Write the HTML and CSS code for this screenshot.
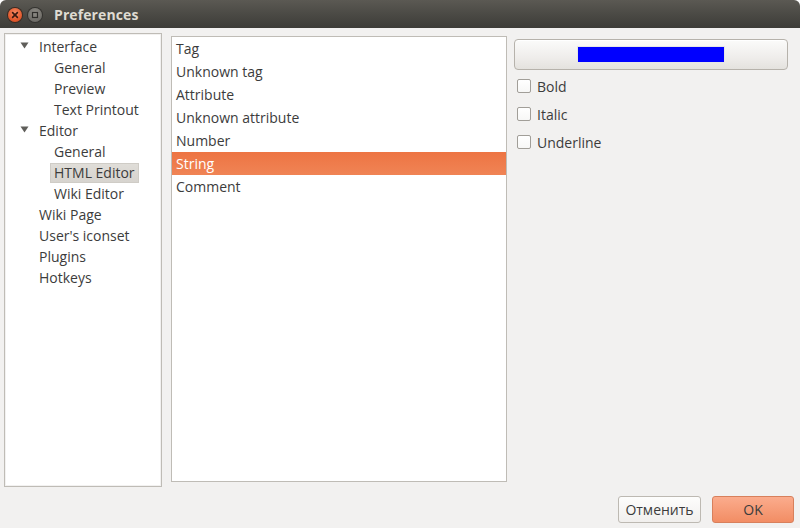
FILE: index.html
```html
<!DOCTYPE html>
<html>
<head>
<meta charset="utf-8">
<link rel="stylesheet" href="styles.css">
</head>
<body>
<div class="window">
  <div class="titlebar">
    <span class="wbtn close"><svg width="14" height="14" viewBox="0 0 14 14"><path d="M4.6 4.6 L9.4 9.4 M9.4 4.6 L4.6 9.4" stroke="#3a1a10" stroke-width="1.6" stroke-linecap="round"/></svg></span>
    <span class="wbtn maxi"><svg width="14" height="14" viewBox="0 0 14 14"><rect x="4.5" y="4.5" width="5" height="5" fill="none" stroke="#2e2d2a" stroke-width="1.2"/></svg></span>
    <span class="title">Preferences</span>
  </div>
  <div class="content">
    <div class="main">
      <div class="tree">
        <div class="node top"><span class="arrow"><svg width="9" height="7" viewBox="0 0 9 7"><polygon points="0.5,0.5 8.5,0.5 4.5,6.5" fill="#5f5e5a"/></svg></span>Interface</div>
        <div class="node child"><span class="lbl">General</span></div>
        <div class="node child"><span class="lbl">Preview</span></div>
        <div class="node child"><span class="lbl">Text Printout</span></div>
        <div class="node top"><span class="arrow"><svg width="9" height="7" viewBox="0 0 9 7"><polygon points="0.5,0.5 8.5,0.5 4.5,6.5" fill="#5f5e5a"/></svg></span>Editor</div>
        <div class="node child"><span class="lbl">General</span></div>
        <div class="node child"><span class="lbl sel">HTML Editor</span></div>
        <div class="node child"><span class="lbl">Wiki Editor</span></div>
        <div class="node top leaf">Wiki Page</div>
        <div class="node top leaf">User's iconset</div>
        <div class="node top leaf">Plugins</div>
        <div class="node top leaf">Hotkeys</div>
      </div>
      <div class="list">
        <div class="item">Tag</div>
        <div class="item">Unknown tag</div>
        <div class="item">Attribute</div>
        <div class="item">Unknown attribute</div>
        <div class="item">Number</div>
        <div class="item selected">String</div>
        <div class="item">Comment</div>
      </div>
      <div class="props">
        <button class="colorbtn"><span class="swatch"></span></button>
        <label class="check"><span class="box"></span>Bold</label>
        <label class="check"><span class="box"></span>Italic</label>
        <label class="check"><span class="box"></span>Underline</label>
      </div>
    </div>
    <div class="footer">
      <button class="btn">Отменить</button>
      <button class="btn ok">OK</button>
    </div>
  </div>
</div>
</body>
</html>
```
FILE: styles.css
```css
* { box-sizing: border-box; }
html, body { margin: 0; padding: 0; }
body {
  width: 800px;
  height: 528px;
  background: #ffffff;
  font-family: "Open Sans", "Noto Sans", "DejaVu Sans", sans-serif;
  font-size: 14px;
  color: #3c3c3c;
  overflow: hidden;
}
.window {
  width: 800px;
  height: 528px;
  display: flex;
  flex-direction: column;
  background: #f2f1f0;
  border-radius: 6px 6px 0 0;
  overflow: hidden;
}
.titlebar {
  height: 28px;
  flex: none;
  display: flex;
  align-items: center;
  padding: 1px 0 0 8px;
  background: linear-gradient(#5b5953, #4b4a45 50%, #3d3c38);
}
.wbtn {
  width: 14px;
  height: 14px;
  border-radius: 50%;
  display: flex;
}
.close {
  background: radial-gradient(circle at 50% 35%, #f58a64, #e55b2e 60%, #c9431c);
  box-shadow: 0 0 0 1px #3a2a22;
}
.maxi {
  margin-left: 6px;
  background: radial-gradient(circle at 50% 35%, #8e8c86, #6f6d68 70%, #5d5b56);
  box-shadow: 0 0 0 1px #33322f;
}
.title {
  margin-left: 12px;
  font-weight: bold;
  color: #dfdbd2;
  font-size: 14px;
  letter-spacing: 0.1px;
}
.content {
  flex: 1;
  display: flex;
  flex-direction: column;
  padding: 5px 6px 5px 4px;
}
.main {
  display: flex;
  align-items: flex-start;
  height: 454px;
}
.tree {
  width: 158px;
  height: 454px;
  background: #ffffff;
  border: 1px solid #bfbcb6;
  box-shadow: inset 0 0 0 1px #f2f1f0;
  padding-top: 2px;
}
.node {
  height: 21px;
  line-height: 21px;
  display: flex;
  align-items: center;
  white-space: nowrap;
}
.node.top { padding-left: 14px; }
.node.leaf { padding-left: 34px; }
.arrow {
  width: 20px;
  display: flex;
  align-items: center;
  padding-left: 1px;
  margin-top: -2px;
}
.node.child { padding-left: 45px; }
.lbl {
  padding: 0 4px;
  height: 20px;
  line-height: 20px;
}
.lbl.sel {
  background: linear-gradient(#e0ded9, #d6d3ce);
  box-shadow: inset 0 0 0 1px #cfccc6;
}
.list {
  margin-left: 9px;
  margin-top: 3px;
  width: 336px;
  height: 446px;
  background: #ffffff;
  border: 1px solid #bfbcb6;
}
.item {
  height: 23px;
  line-height: 23px;
  padding-left: 4px;
}
.item.selected {
  background: linear-gradient(#ed7443, #f08455);
  color: #ffffff;
}
.props {
  margin-left: 7px;
  margin-top: 6px;
  width: 274px;
  display: flex;
  flex-direction: column;
}
.colorbtn {
  height: 31px;
  width: 274px;
  border: 1px solid #b6b2ab;
  border-radius: 4px;
  background: linear-gradient(#fbfbfa, #efedeb 60%, #e4e2de);
  box-shadow: inset 0 1px 0 #ffffff;
  display: flex;
  align-items: center;
  justify-content: center;
  padding: 0;
}
.swatch {
  width: 148px;
  height: 17px;
  background: #0000ff;
  border: 1px solid #e6e6e6;
}
.check {
  height: 28px;
  display: flex;
  align-items: center;
  padding-left: 3px;
}
.check:first-of-type { margin-top: 2px; }
.box {
  width: 14px;
  height: 14px;
  border: 1px solid #a19e98;
  border-radius: 2px;
  background: linear-gradient(#ffffff, #f7f7f6);
  margin-right: 6px;
}
.footer {
  margin-top: 9px;
  display: flex;
  justify-content: flex-end;
  gap: 11px;
}
.btn {
  font-family: inherit;
  font-size: 14px;
  color: #3c3c3c;
  height: 27px;
  width: 83px;
  border: 1px solid #bdb9b2;
  border-radius: 3px;
  background: linear-gradient(#fdfdfc, #f1efed);
  padding: 0;
}
.btn.ok {
  width: 82px;
  border-color: #d8805c;
  background: linear-gradient(#fbac8d, #f28d64);
}
```
